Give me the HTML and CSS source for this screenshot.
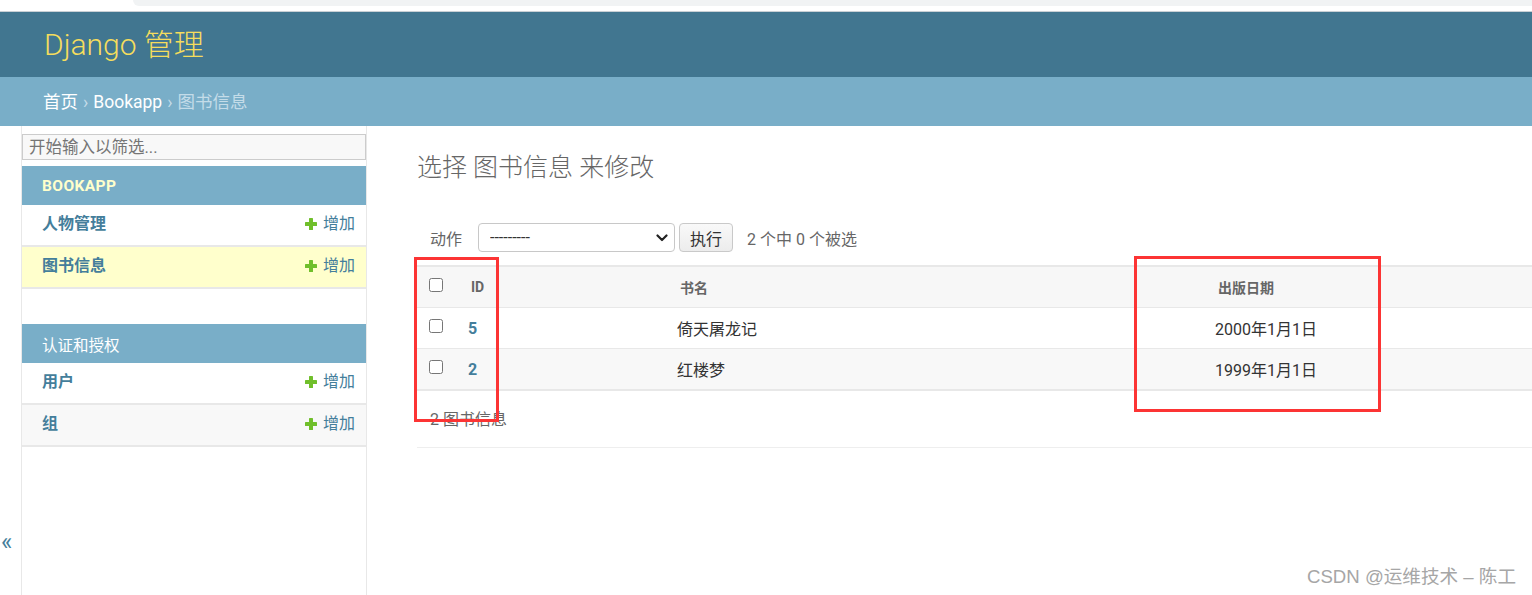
FILE: index.html
```html
<!DOCTYPE html>
<html lang="zh-CN">
<head>
<meta charset="utf-8">
<title>选择 图书信息 来修改 | Django 站点管理员</title>
<link rel="stylesheet" href="styles.css">
</head>
<body>
<div class="chrome"><div class="tab-strip"></div></div>
<header class="site-header">
  <h1 class="branding">Django 管理</h1>
</header>
<nav class="breadcrumbs">
  <a href="#">首页</a><span class="sep">›</span><a href="#">Bookapp</a><span class="sep">›</span><span class="here">图书信息</span>
</nav>
<div class="main">
  <div class="toggle-col"><span class="toggle">«</span></div>
  <aside class="sidebar">
    <input class="filter" type="search" placeholder="开始输入以筛选...">
    <div class="module">
      <div class="caption current">BOOKAPP</div>
      <div class="model-row">
        <a class="model-name" href="#">人物管理</a>
        <a class="addlink" href="#"><svg width="12" height="12" viewBox="0 0 12 12"><rect x="4" y="0" width="4" height="12" rx="0.6" fill="#70bf2b"/><rect x="0" y="4" width="12" height="4" rx="0.6" fill="#70bf2b"/></svg>增加</a>
      </div>
      <div class="model-row selected">
        <a class="model-name" href="#">图书信息</a>
        <a class="addlink" href="#"><svg width="12" height="12" viewBox="0 0 12 12"><rect x="4" y="0" width="4" height="12" rx="0.6" fill="#70bf2b"/><rect x="0" y="4" width="12" height="4" rx="0.6" fill="#70bf2b"/></svg>增加</a>
      </div>
    </div>
    <div class="module">
      <div class="caption">认证和授权</div>
      <div class="model-row">
        <a class="model-name" href="#">用户</a>
        <a class="addlink" href="#"><svg width="12" height="12" viewBox="0 0 12 12"><rect x="4" y="0" width="4" height="12" rx="0.6" fill="#70bf2b"/><rect x="0" y="4" width="12" height="4" rx="0.6" fill="#70bf2b"/></svg>增加</a>
      </div>
      <div class="model-row alt">
        <a class="model-name" href="#">组</a>
        <a class="addlink" href="#"><svg width="12" height="12" viewBox="0 0 12 12"><rect x="4" y="0" width="4" height="12" rx="0.6" fill="#70bf2b"/><rect x="0" y="4" width="12" height="4" rx="0.6" fill="#70bf2b"/></svg>增加</a>
      </div>
    </div>
  </aside>
  <main class="content">
    <h1 class="page-title">选择 图书信息 来修改</h1>
    <div class="actions">
      <label class="action-label">动作</label>
      <div class="select-wrap">
        <select class="action-select"><option>---------</option></select>
        <svg class="chev" width="12" height="8" viewBox="0 0 12 8"><path d="M1.5 1.5 L6 6 L10.5 1.5" fill="none" stroke="#222" stroke-width="2.2" stroke-linecap="round" stroke-linejoin="round"/></svg>
      </div>
      <button class="go" type="button">执行</button>
      <span class="counter">2 个中 0 个被选</span>
    </div>
    <table class="results">
      <colgroup><col class="c1"><col class="c2"><col class="c3"><col></colgroup>
      <thead>
        <tr><th><input class="cb" type="checkbox"></th><th>ID</th><th>书名</th><th>出版日期</th></tr>
      </thead>
      <tbody>
        <tr><td><input class="cb" type="checkbox"></td><td><a class="id-link" href="#">5</a></td><td>倚天屠龙记</td><td>2000年1月1日</td></tr>
        <tr class="alt"><td><input class="cb" type="checkbox"></td><td><a class="id-link" href="#">2</a></td><td>红楼梦</td><td>1999年1月1日</td></tr>
      </tbody>
    </table>
    <p class="paginator">2 图书信息</p>
  </main>
</div>
<div class="mark mark-left"></div>
<div class="mark mark-right"></div>
<div class="watermark">CSDN @运维技术 – 陈工</div>
</body>
</html>
```
FILE: styles.css
```css
html, body {
  margin: 0;
  padding: 0;
}
body {
  width: 1532px;
  height: 595px;
  overflow: hidden;
  position: relative;
  background: #fff;
  font-family: Roboto, "Noto Sans CJK SC", sans-serif;
  color: #333;
}
a { text-decoration: none; }

.chrome {
  height: 11px;
  border-bottom: 1px solid #c9d0d5;
  background: #fff;
}
.tab-strip {
  margin-left: 133px;
  height: 6px;
  background: #f1f3f4;
  border-bottom-left-radius: 8px;
}

.site-header {
  height: 65px;
  background: #417690;
  display: flex;
  align-items: center;
  padding-left: 44px;
}
.branding {
  margin: 0;
  font-size: 30px;
  font-weight: 300;
  line-height: 36px;
  color: #f5dd5d;
}

.breadcrumbs {
  height: 49px;
  background: #79aec8;
  display: flex;
  align-items: center;
  padding-left: 43px;
  font-size: 17.5px;
  line-height: 22px;
  color: #c4dce8;
}
.breadcrumbs a { color: #fff; }
.breadcrumbs .sep { margin: 0 5px; color: #c4dce8; }
.breadcrumbs .here { color: #c4dce8; }

.main {
  display: flex;
  height: 469px;
}
.toggle-col {
  width: 22px;
  flex: 0 0 22px;
  border-right: 1px solid #e8e8e8;
  padding: 405px 0 0 1px;
  box-sizing: border-box;
  display: flex;
  justify-content: flex-start;
}
.toggle {
  font-size: 24px;
  line-height: 22px;
  height: 22px;
  color: #447e9b;
}

.sidebar {
  width: 344px;
  flex: 0 0 344px;
  border-right: 1px solid #e8e8e8;
  padding-top: 8px;
}
.filter {
  display: block;
  box-sizing: border-box;
  width: 344px;
  height: 26px;
  margin: 0 0 6px 0;
  padding: 0 6px;
  border: 1px solid #ccc;
  background: #f8f8f8;
  font-family: Roboto, "Noto Sans CJK SC", sans-serif;
  font-size: 16.5px;
  color: #333;
  outline: none;
}
.filter::placeholder { color: #757575; }

.module { margin-bottom: 35px; }
.caption {
  height: 39px;
  display: flex;
  align-items: center;
  padding-left: 20px;
  background: #79aec8;
  color: #fff;
  font-size: 15.5px;
}
.caption.current {
  color: #ffc;
  font-weight: 700;
  letter-spacing: 0.4px;
}
.model-row {
  height: 40px;
  display: flex;
  align-items: center;
  justify-content: space-between;
  padding: 0 11px 0 20px;
  border-bottom: 2px solid #e8e8e8;
  background: #fff;
}
.model-row.selected { background: #ffc; }
.model-row.alt { background: #f8f8f8; }
.model-name {
  color: #447e9b;
  font-weight: 700;
  font-size: 16px;
  line-height: 20px;
  margin-top: -2px;
}
.addlink {
  display: flex;
  align-items: center;
  gap: 6px;
  color: #447e9b;
  font-size: 16px;
  line-height: 20px;
  margin-top: -2px;
}

.content {
  flex: 1;
  padding-left: 50px;
  padding-top: 27px;
  min-width: 0;
}
.page-title {
  margin: 0;
  font-size: 25px;
  font-weight: 300;
  line-height: 30px;
  color: #666;
}
.actions {
  margin-top: 40px;
  height: 29px;
  display: flex;
  align-items: center;
  padding-left: 13px;
  font-size: 16px;
  color: #666;
}
.action-label { margin-right: 16px; }
.select-wrap {
  position: relative;
  width: 197px;
  height: 29px;
}
.action-select {
  appearance: none;
  -webkit-appearance: none;
  box-sizing: border-box;
  width: 197px;
  height: 29px;
  border: 1px solid #c8c8c8;
  border-radius: 4px;
  background: #fff;
  padding: 0 0 0 11px;
  font-family: Roboto, "Noto Sans CJK SC", sans-serif;
  font-size: 16px;
  color: #333;
}
.chev {
  position: absolute;
  right: 7px;
  top: 11px;
  pointer-events: none;
}
.go {
  margin-left: 4px;
  box-sizing: border-box;
  width: 54px;
  height: 29px;
  border: 1px solid #c9c9c9;
  border-radius: 4px;
  background: linear-gradient(#f9f9f9, #ececec);
  font-family: Roboto, "Noto Sans CJK SC", sans-serif;
  font-size: 16px;
  color: #333;
  padding: 0;
}
.counter { margin-left: 14px; }

.results {
  margin-top: 13px;
  width: 100%;
  border-collapse: collapse;
  border-top: 2px solid #e8e8e8;
}
.results col.c1 { width: 39px; }
.results col.c2 { width: 209px; }
.results col.c3 { width: 538px; }
.results th, .results td {
  padding: 0 0 0 12px;
  text-align: left;
  vertical-align: middle;
  height: 40px;
  box-sizing: content-box;
  border-bottom: 1px solid #e8e8e8;
}
.results thead th {
  background: #f7f7f7;
  color: #666;
  font-weight: 700;
  font-size: 14px;
  padding-left: 15px;
}
.results thead th:first-child { padding-left: 12px; }
.results td {
  font-size: 16px;
  color: #333;
}
.results tbody tr.alt td { background: #f8f8f8; }
.results tbody tr:last-child td { border-bottom: 2px solid #e8e8e8; }
.cb {
  display: block;
  width: 14px;
  height: 14px;
  margin: -4px 0 0 0;
}
.id-link {
  color: #447e9b;
  font-weight: 700;
}

.paginator {
  margin: 0;
  height: 54px;
  line-height: 54px;
  padding: 2px 0 0 13px;
  border-bottom: 1px solid #eee;
  font-size: 16px;
  color: #666;
}

.mark {
  position: absolute;
  box-sizing: border-box;
  border: 3px solid #fc3434;
}
.mark-left { left: 414px; top: 257px; width: 85px; height: 165px; }
.mark-right { left: 1134px; top: 256px; width: 247px; height: 156px; }

.watermark {
  position: absolute;
  right: 16px;
  top: 565px;
  font-family: "Liberation Sans", "Noto Sans CJK SC", sans-serif;
  font-size: 18.6px;
  line-height: 24px;
  color: #a6a6a6;
}
```
